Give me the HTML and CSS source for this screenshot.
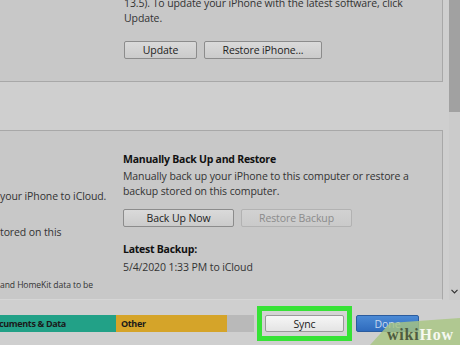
FILE: index.html
```html
<!DOCTYPE html>
<html>
<head>
<meta charset="utf-8">
<link rel="stylesheet" href="styles.css">
</head>
<body>
<div class="main">
  <div class="content">
    <section class="panel panel-top">
      <p>13.5). To update your iPhone with the latest software, click</p>
      <p>Update.</p>
      <div class="btn-row">
        <div class="btn w-update">Update</div>
        <div class="btn w-restore">Restore iPhone...</div>
      </div>
    </section>
    <section class="panel panel-backup">
      <div class="col-left">
        <p class="l1">your iPhone to iCloud.</p>
        <p class="l2">tored on this</p>
        <p class="l3">and HomeKit data to be</p>
      </div>
      <div class="col-right">
        <h3 class="title">Manually Back Up and Restore</h3>
        <p class="desc">Manually back up your iPhone to this computer or restore a<br>backup stored on this computer.</p>
        <div class="btn-row btn-row-backup">
          <div class="btn w-backup">Back Up Now</div>
          <div class="btn btn-disabled w-backup">Restore Backup</div>
        </div>
        <h3 class="title latest">Latest Backup:</h3>
        <p class="date">5/4/2020 1:33 PM to iCloud</p>
      </div>
    </section>
  </div>
  <div class="scrollbar">
    <div class="thumb"></div>
    <div class="track">
      <svg class="chev" width="7" height="5" viewBox="0 0 7 5"><path d="M0.5 0.8 L3.5 3.8 L6.5 0.8" fill="none" stroke="#333" stroke-width="1.2"/></svg>
    </div>
  </div>
</div>
<div class="bottombar">
  <div class="storage">
    <div class="seg seg-docs">cuments &amp; Data</div>
    <div class="seg seg-other">Other</div>
    <div class="seg seg-free"></div>
  </div>
  <div class="highlight">
    <div class="btn sync">Sync</div>
  </div>
  <div class="done">Done</div>
</div>
<div class="wm">
  <div class="wm-shape"></div>
  <div class="wm-text"><span class="wiki">wiki</span><span class="how">How</span></div>
</div>
</body>
</html>
```
FILE: styles.css
```css
* { box-sizing: border-box; }
html, body { margin: 0; padding: 0; }
body {
  width: 460px;
  height: 345px;
  overflow: hidden;
  background: #cfcfcf;
  font-family: "Open Sans", "Noto Sans", sans-serif;
  font-size: 10.5px;
  letter-spacing: -0.1px;
  color: #333;
  position: relative;
}
p, h3 { margin: 0; }

.main { display: flex; height: 300px; overflow: hidden; }
.content { width: 449px; display: flex; flex-direction: column; }

.panel {
  margin-left: -1px;
  margin-right: 6px;
  border: 1px solid #a8a8a8;
  background: #c8c8c8;
}
.panel-top {
  margin-top: -4px;
  border-top: none;
  padding: 0 0 22px 124px;
}
.panel-top p { line-height: 15px; white-space: nowrap; }

.btn-row { display: flex; gap: 7px; margin-top: 15px; }
.btn {
  height: 18px;
  border: 1px solid #8c8c8c;
  border-radius: 2px;
  background: linear-gradient(#dadada, #cbcbcb);
  color: #222;
  display: flex;
  align-items: center;
  justify-content: center;
  white-space: nowrap;
}
.w-update { width: 73px; }
.w-restore { width: 118px; }
.w-backup { width: 111px; }
.btn-disabled { border-color: #b2b2b2; color: #8b8b8b; background: linear-gradient(#d2d2d2, #cacaca); }

.panel-backup {
  margin-top: 48px;
  flex: 1;
  display: grid;
  grid-template-columns: 123px 1fr;
  border-bottom-color: #d6d6d6;
}
.col-left { overflow: hidden; white-space: nowrap; padding-top: 20px; }
.col-left p { line-height: 15px; }
.col-left .l1 { margin-top: 38px; }
.col-left .l2 { margin-top: 21px; }
.col-left .l3 { margin-top: 39px; font-size: 8.6px; line-height: 12px; }

.col-right { padding-top: 20px; white-space: nowrap; }
.title { font-size: 10.5px; font-weight: 700; color: #111; line-height: 16px; letter-spacing: -0.25px; }
.desc { margin-top: 2px; line-height: 15px; }
.btn-row-backup { margin-top: 10px; }
.latest { margin-top: 14px; }
.date { margin-top: 2px; line-height: 16px; }

.scrollbar { width: 11px; display: flex; flex-direction: column; }
.thumb { height: 112px; background: #a1a1a1; }
.track {
  flex: 1;
  background: #cbcbcb;
  display: flex;
  align-items: flex-end;
  justify-content: center;
  padding-bottom: 6px;
}

.bottombar { display: flex; height: 45px; align-items: flex-start; }
.storage { display: flex; width: 254px; height: 17px; margin-top: 15px; }
.seg {
  height: 17px;
  font-weight: 700;
  font-size: 9px;
  letter-spacing: -0.35px;
  line-height: 17px;
  color: #1a1a1a;
  white-space: nowrap;
  overflow: hidden;
}
.seg-docs { width: 116px; background: #22a187; text-indent: -1px; }
.seg-other { width: 111px; background: #d5a429; padding-left: 5px; }
.seg-free { width: 27px; background: #b9b9b9; }

.highlight {
  margin-left: 3px;
  margin-top: 6px;
  border: 5px solid #36e236;
  padding: 4px 3px;
  background: #d4d4d4;
}
.sync {
  width: 79px;
  height: 17px;
  background: linear-gradient(#f6f6f6, #e4e4e4);
  border-color: #9a9a9a;
  color: #1a1a1a;
}
.done {
  margin-left: 4px;
  margin-top: 15px;
  width: 63px;
  height: 17px;
  border: 1px solid #2b5c9e;
  border-radius: 2px;
  background: linear-gradient(#4b8ad5, #2f6bbd);
  color: #c9daf0;
  display: flex;
  align-items: center;
  justify-content: center;
}

.wm {
  position: absolute;
  left: 370px;
  top: 317px;
  width: 90px;
  height: 28px;
}
.wm-shape {
  position: absolute;
  inset: 0;
  background: rgba(168, 198, 130, 0.82);
  clip-path: polygon(0 100%, 20px 6px, 100% 1px, 100% 100%);
}
.wm-text {
  position: relative;
  padding: 10px 0 0 17px;
  font-family: "Liberation Serif", "DejaVu Serif", serif;
  font-weight: 700;
  font-size: 16px;
  line-height: 16px;
  letter-spacing: 0.8px;
  white-space: nowrap;
}
.wiki { color: #4e5c40; }
.how { color: #f6f9f0; }
```
